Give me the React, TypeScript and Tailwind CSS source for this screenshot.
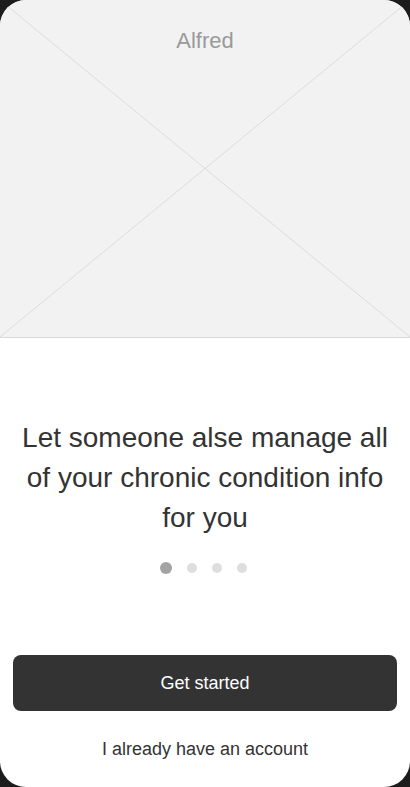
import React from "react";

const DOTS = [true, false, false, false];

export default function App() {
  return (
    <div className="w-[410px] h-[787px] bg-[#1c1c1c]" style={{ fontFamily: '"Liberation Sans", Arial, sans-serif' }}>
      <div className="w-full h-full bg-white rounded-[26px] overflow-hidden flex flex-col">
        {/* Hero placeholder */}
        <div className="relative h-[338px] shrink-0 bg-[#f2f2f2] border-b border-[#d9d9d9]">
          <svg className="absolute inset-0 w-full h-full" viewBox="0 0 410 337" preserveAspectRatio="none">
            <line x1="0" y1="0" x2="410" y2="337" stroke="#dcdcdc" strokeWidth="1" />
            <line x1="410" y1="0" x2="0" y2="337" stroke="#dcdcdc" strokeWidth="1" />
          </svg>
          <p className="relative pt-[24px] text-center text-[22px] text-[#9a9a9a]">Alfred</p>
        </div>

        {/* Copy */}
        <div className="flex flex-col items-center pt-[80px]">
          <h1 className="px-[18px] text-center text-[28px] leading-[40px] text-[#333]">
            Let someone alse manage all of your chronic condition info for you
          </h1>
          <div className="flex items-center gap-[15px] mt-[24px] -translate-x-[2px]">
            {DOTS.map((active, i) =>
              active ? (
                <span key={i} className="w-[12px] h-[12px] rounded-full bg-[#a3a3a3]" />
              ) : (
                <span key={i} className="w-[10px] h-[10px] rounded-full bg-[#dedede]" />
              )
            )}
          </div>
        </div>

        {/* Actions */}
        <div className="mt-auto px-[13px] pb-[24px] flex flex-col items-center">
          <button className="w-full h-[56px] rounded-[8px] bg-[#333] text-white text-[18px] font-medium">
            Get started
          </button>
          <button className="mt-[25px] text-[18px] text-[#333]">I already have an account</button>
        </div>
      </div>
    </div>
  );
}
